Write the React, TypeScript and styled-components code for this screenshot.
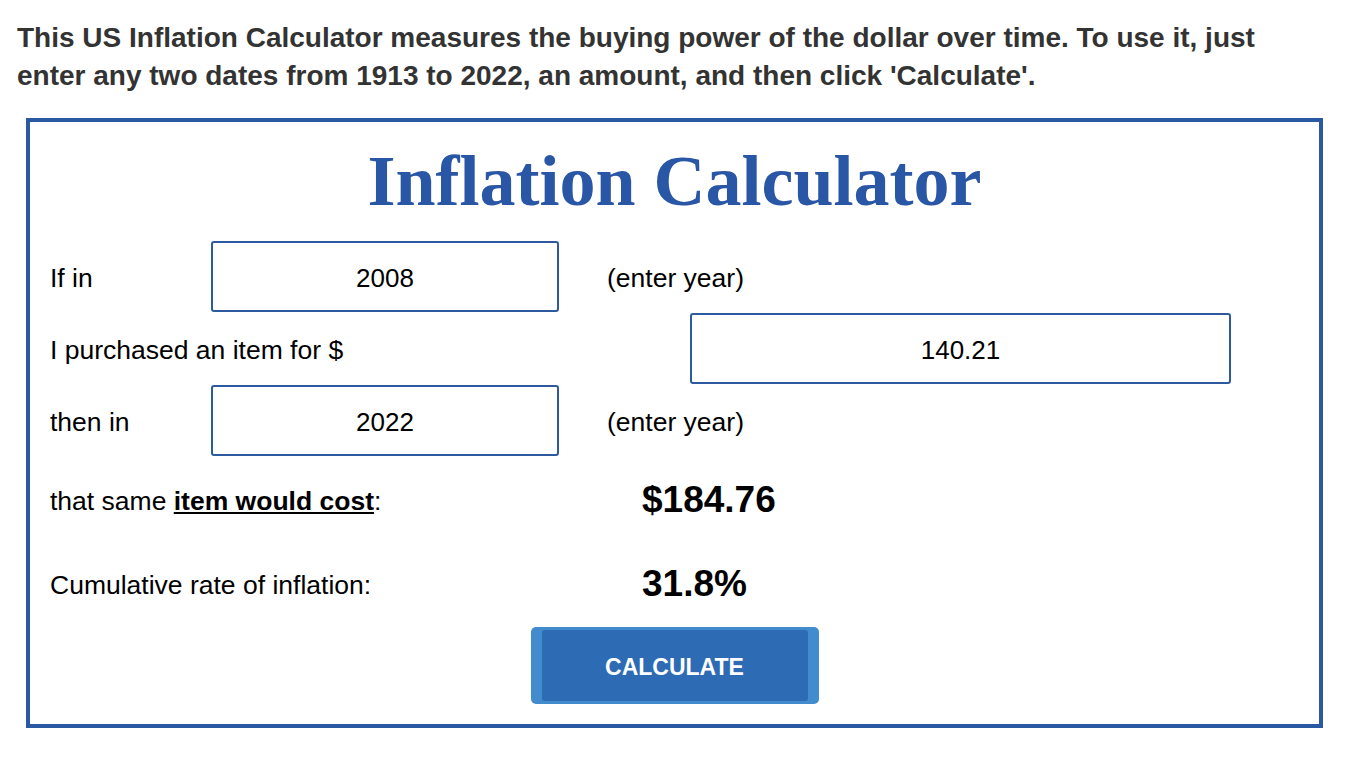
import styled, { createGlobalStyle } from "styled-components"

const GlobalStyle = createGlobalStyle`
  html, body {
    margin: 0;
    padding: 0;
    background: #fff;
  }
  body {
    font-family: "Liberation Sans", Arial, sans-serif;
  }
`

const Page = styled.div`
  padding: 19px 34px 0 17px;
  width: 1356px;
  box-sizing: border-box;
`

const Intro = styled.p`
  margin: 0 0 23px;
  font-size: 28px;
  line-height: 38px;
  font-weight: bold;
  color: #333;
`

const Frame = styled.div`
  margin-left: 9px;
  width: 1297px;
  box-sizing: border-box;
  border: 4px solid #2b58a3;
  padding: 19px 20px 20px;
  display: flex;
  flex-direction: column;
  color: #000;
  font-size: 26px;
`

const Title = styled.h1`
  margin: 0 0 20px;
  font-family: "Liberation Serif", "Times New Roman", serif;
  font-size: 72px;
  line-height: 80px;
  font-weight: bold;
  text-align: center;
  color: #2a56a6;
`

const Rows = styled.div`
  display: flex;
  flex-direction: column;
  gap: 1px;
`

const Row = styled.div<{ $cols: string; $height?: number }>`
  display: grid;
  grid-template-columns: ${(p) => p.$cols};
  align-items: center;
  height: ${(p) => (p.$height ? `${p.$height}px` : "auto")};
`

const Label = styled.span`
  white-space: nowrap;
  padding-top: 4px;
  font-size: 26.5px;
`

const Field = styled.input`
  box-sizing: border-box;
  width: 100%;
  height: 71px;
  border: 2px solid #2d5a9e;
  border-radius: 3px;
  background: #fff;
  text-align: center;
  font-family: "Liberation Sans", Arial, sans-serif;
  font-size: 26px;
  color: #000;
  outline: none;
  padding: 4px 0 0;
`

const Strong = styled.span`
  font-weight: bold;
  text-decoration: underline;
`

const Result = styled.span`
  font-size: 37px;
  font-weight: bold;
  padding-top: 2px;
`

const ButtonRow = styled.div`
  display: flex;
  justify-content: center;
  margin-top: 3px;
`

const CalcButton = styled.button`
  width: 288px;
  height: 77px;
  padding: 3px 11px;
  box-sizing: border-box;
  border: none;
  border-radius: 5px;
  background: #428bcc;
  cursor: pointer;
  display: flex;
`

const ButtonFace = styled.span`
  flex: 1;
  display: flex;
  align-items: center;
  justify-content: center;
  padding-top: 3px;
  border-radius: 3px;
  background: #2d6bb5;
  color: #fff;
  font-family: "Liberation Sans", Arial, sans-serif;
  font-size: 23px;
  font-weight: bold;
`

export default function App() {
  return (
    <Page>
      <GlobalStyle />
      <Intro>
        This US Inflation Calculator measures the buying power of the dollar over time. To use it, just
        enter any two dates from 1913 to 2022, an amount, and then click 'Calculate'.
      </Intro>
      <Frame>
        <Title>Inflation Calculator</Title>
        <Rows>
          <Row $cols="161px 348px 48px auto">
            <Label>If in</Label>
            <Field defaultValue="2008" />
            <span />
            <Label>(enter year)</Label>
          </Row>
          <Row $cols="640px 541px">
            <Label>I purchased an item for $</Label>
            <Field defaultValue="140.21" />
          </Row>
          <Row $cols="161px 348px 48px auto">
            <Label>then in</Label>
            <Field defaultValue="2022" />
            <span />
            <Label>(enter year)</Label>
          </Row>
          <Row $cols="592px auto" $height={84}>
            <Label>
              that same <Strong>item would cost</Strong>:
            </Label>
            <Result>$184.76</Result>
          </Row>
          <Row $cols="592px auto" $height={82}>
            <Label>Cumulative rate of inflation:</Label>
            <Result>31.8%</Result>
          </Row>
        </Rows>
        <ButtonRow>
          <CalcButton>
            <ButtonFace>CALCULATE</ButtonFace>
          </CalcButton>
        </ButtonRow>
      </Frame>
    </Page>
  )
}
